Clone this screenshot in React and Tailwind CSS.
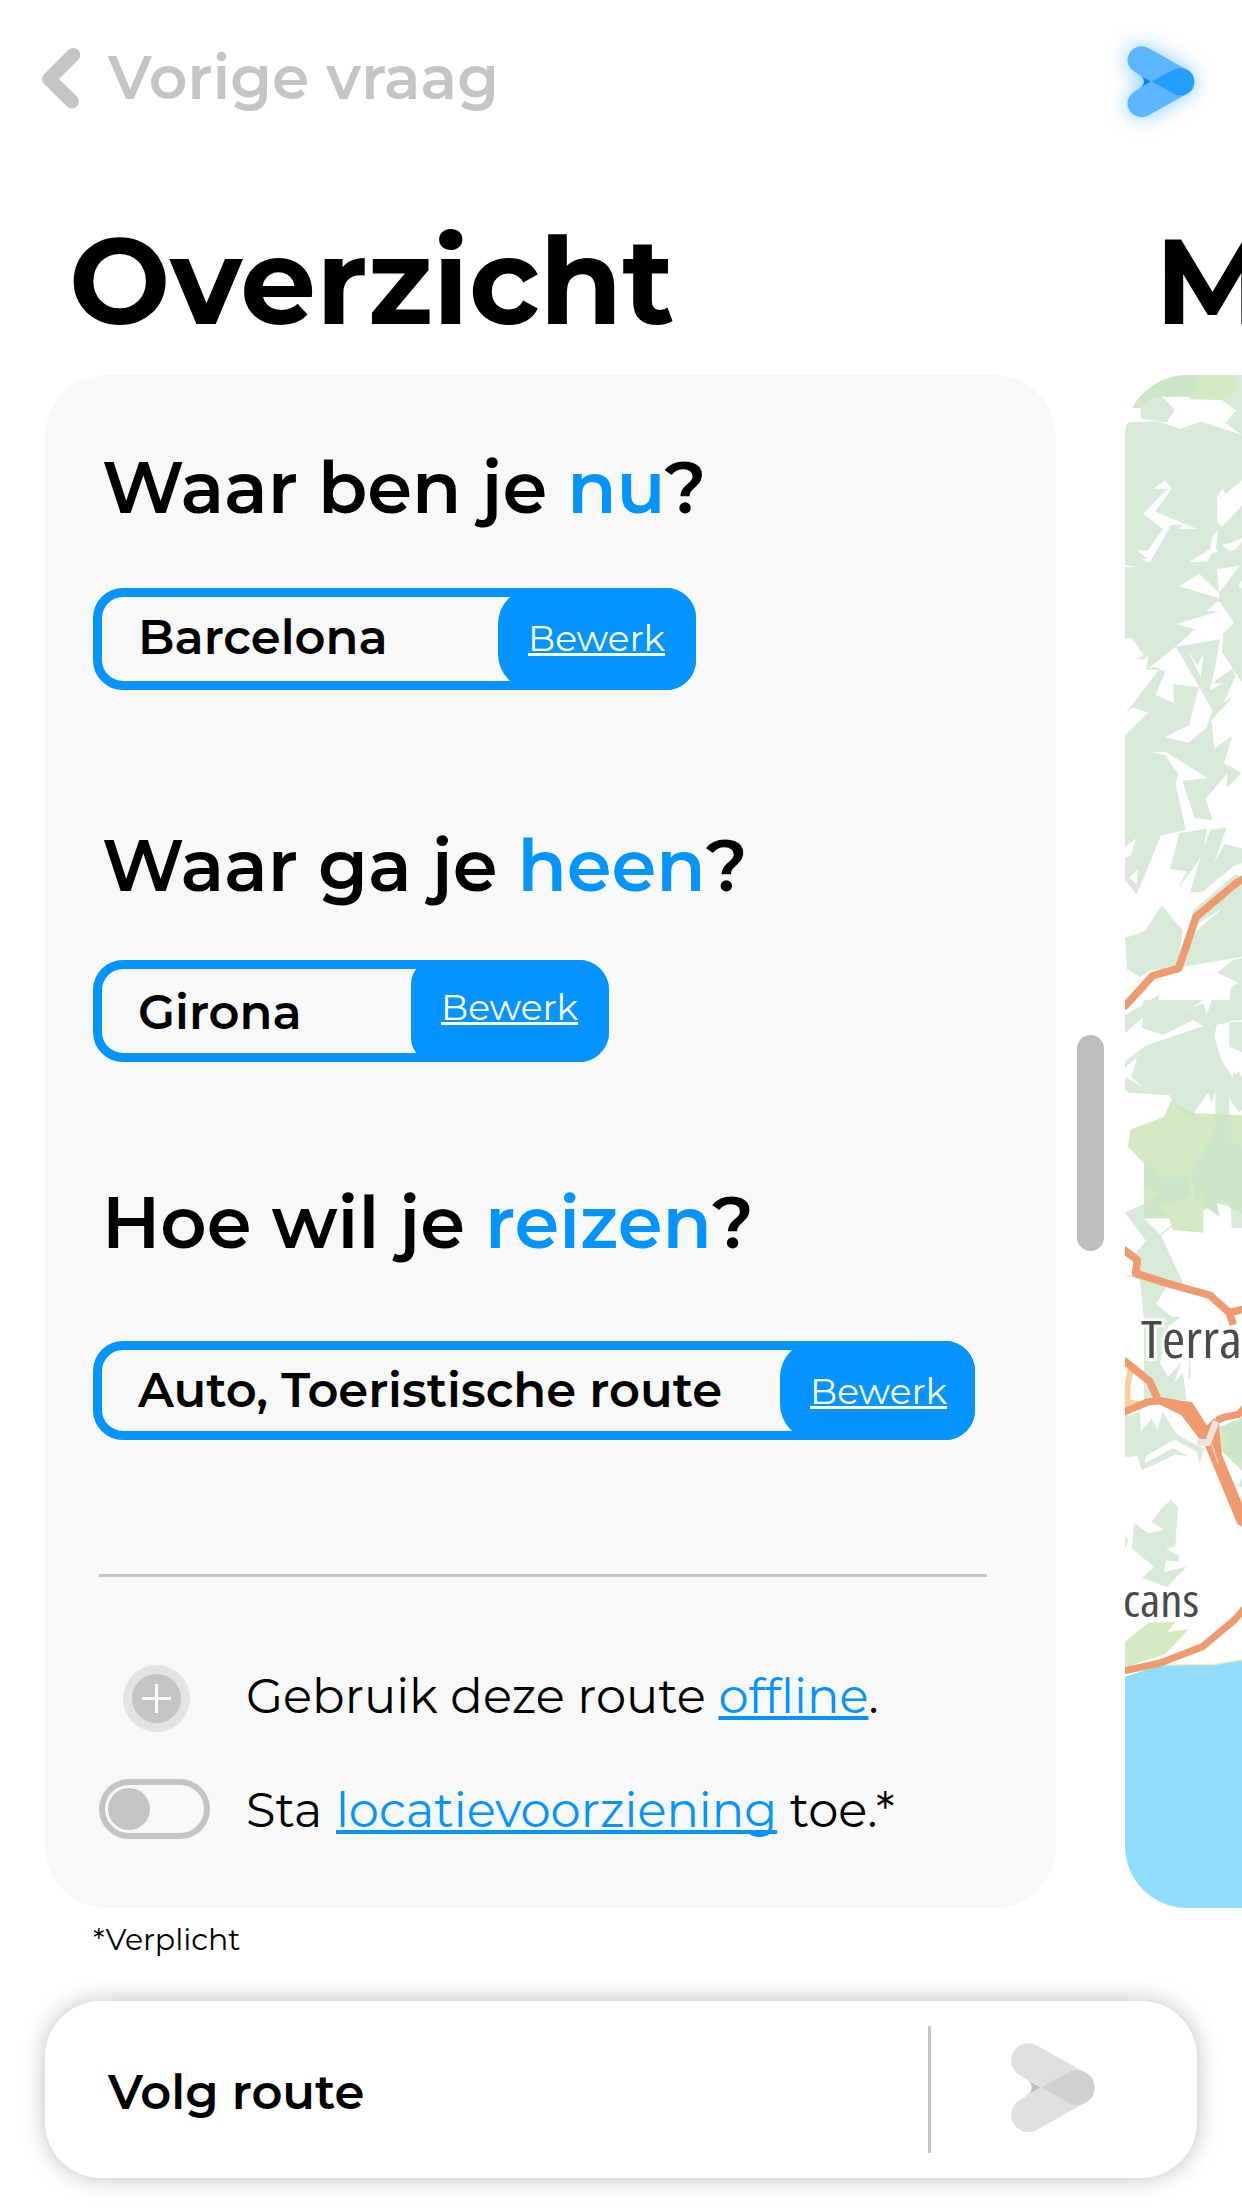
import React from "react";

function Logo({ className, arm, overlap, notch }) {
  return (
    <svg viewBox="0 0 84 90" className={`overflow-visible ${className}`}>
      <path d="M14.500 36L30 44.500L14.500 53Q20.700 49.500 20.700 44.500Q20.700 39.500 14.500 36Z" fill={notch} />
      <path d="M17.500 0.300A17.200 17.200 0 0 1 26 2.500L75 30Q66 25.500 57 30L30 44.500L9 32.500A17.200 17.200 0 0 1 17.500 0.300Z" fill={arm} />
      <path d="M17.500 89A17.200 17.200 0 0 0 26 86.800L75 59.300Q66 63.800 57 59.300L30 44.500L9 56.800A17.200 17.200 0 0 0 17.500 89Z" fill={arm} />
      <path d="M30 44.500L57 29.700Q66 25 75 29.700A17.200 17.200 0 0 1 75 59.600Q66 64.300 57 59.400Z" fill={overlap} />
    </svg>
  );
}

function Question({ className = "", markClass = "", before, word }) {
  return (
    <h2 className={`ml-[9px] text-[72px] leading-none font-semibold whitespace-nowrap ${className}`}>
      {before} <span className="text-[#0394ff]">{word}</span>
      <span className={`inline-block ${markClass}`}>?</span>
    </h2>
  );
}

function Answer({ className, valueClass, buttonClass, children }) {
  return (
    <div className={`flex justify-between rounded-[30px] border-[9px] border-[#0394ff] ${className}`}>
      <span className={`ml-9 text-5xl leading-none font-semibold whitespace-nowrap ${valueClass}`}>{children}</span>
      <button
        type="button"
        className={`-my-[9px] -mr-[9px] flex items-start rounded-r-[30px] bg-[#0394ff] pl-[30px] text-4xl leading-none font-normal text-white underline [text-decoration-skip-ink:none] ${buttonClass}`}
      >
        Bewerk
      </button>
    </div>
  );
}

const FOREST = "#d8ead8";
const PARK = "#d3eac2";
const DEEP = "#cde5c8";
const ROAD = "#ee9b70";

function RouteMap() {
  return (
    <svg viewBox="0 0 117 1533" className="h-full w-[117px] bg-white">
      <g transform="translate(-65 -175) scale(.33333)">
        <path fill={DEEP} d="M195 525H546V590L330 590Q270 600 240 625L195 625Z" />
        <path fill={PARK} d="M415 525H526L520 600H385L400 580ZM220 612L250 590L240 625Z" />
        <path fill="#fff" d="M195 625H242V655L246 662L215 666H195Z" />
        <path fill={FOREST} d="M526 525H546V705L495 668L528 632L485 600L524 580ZM242 625Q262 590 310 588L344 630L322 668L242 655Z" />
        <path fill={FOREST} d="M195 690Q195 666 215 666L290 664L362 686L422 664L546 705V1205H195Z" />
        <g fill="#fff">
          <path d="M306 588L345 597L485 600L529 632L496 668L530 697L422 664L362 686L320 668L344 630Z" />
          <path d="M280 866L316 841L335 866L286 935L412 987H355L370 975L334 974L268 1090L245 1078L262 1076L230 1050L262 1052L309 988L250 941L322 866Z" />
          <path d="M546 841L496 882L488 865L476 880L496 915L472 880L472 965L485 982L546 917Z" />
          <path d="M387 1086L450 1048L458 1010L474 990L468 1045L475 1055L458 1060L442 1085Z" />
          <path d="M546 1015L510 1030L484 1035L510 1053L524 1050L546 1025ZM540 1097L471 1108L477 1178ZM546 1140L535 1160L546 1165Z" />
          <path d="M357 1159L418 1121L477 1178V1195Z" />
          <path d="M195 1096L240 1101L195 1102Z" />
        </g>
      </g>
      <g transform="translate(-65 225) scale(.33333)">
        <path fill={FOREST} d="M195 0H546V250L486 155L490 98L523 69L475 0L440 34L480 34L351 72L405 88L348 140L262 208L318 212L287 284L342 308L350 308L396 268V316L318 328L322 312L342 308L340 253L416 262L388 374L316 411L385 428L440 383L457 330L470 318L518 291L454 360L463 446L517 408L492 490L545 519L500 565L502 520L436 597L457 660L378 690L303 706L230 884L195 840V774L214 765L228 715L195 742V406L264 338L220 322L195 342L300 205L280 200L258 210L266 165L252 178L226 178L252 164L215 114L195 116Z" />
        <g fill="#fff">
          <path d="M287 200L348 140L412 262L340 253L342 308L287 284L318 212Z" />
          <path d="M383 148L412 196L430 162L422 232Z" />
          <path d="M351 72L478 34L484 98L478 120L348 140L405 88Z" />
          <path d="M480 118L460 240L510 205L526 232L488 313L446 303L470 318L500 302L546 255V250L486 155Z" />
          <path d="M275 457L318 456L443 535L368 543L404 654L457 660L500 682L378 690L346 550L356 525L316 466Z" />
          <path d="M208 834L234 808L230 852Z" />
        </g>
        <path fill={FOREST} d="M348 140L480 118L456 250L518 205L526 232L488 313L470 330L457 330ZM340 253L412 262L396 268L350 310L342 308Z" />
        <path fill="#fff" d="M383 148L412 196L430 162L422 232ZM452 250L488 250L450 270ZM462 215L470 240L458 240Z" />
        <path fill={FOREST} d="M358 700L440 686L430 760L400 805L354 864L380 814L330 807Z" />
        <path fill={FOREST} d="M368 543L443 535L502 520L436 597L457 660L404 654Z" />
        <path fill={FOREST} d="M450 690L500 682L462 790L495 732L546 745V790L525 795L428 875L390 878L410 808Z" />
        <path fill={FOREST} d="M195 1014L256 992L305 916L369 992L352 1100L270 1112L240 1132L201 1108ZM400 930L526 822L546 830V1070L360 1102ZM520 1080L472 1118L536 1148L512 1165L508 1200H546V1075ZM270 1200L300 1183L295 1200Z" />
        <path fill="#fff" d="M412 972L488 924L440 965L402 1000Z" />
      </g>
      <g transform="translate(-65 625) scale(.33333)">
        <path fill={FOREST} d="M195 45L245 18L252 0H430L400 20L300 60L430 10L440 45L455 0H546V60L510 62L508 140L546 156V330L536 336L508 295V350H466V270L455 310L445 278L385 360L340 320L330 286L205 278L195 268V230L250 262L214 232L232 170L195 203V185L255 138L430 78L398 60L310 104L245 84L250 50L195 100Z" />
        <path fill="#fff" d="M470 75L508 66V140L546 156V232L536 215L524 225V205L518 232L484 180L463 110Z" />
        <path fill={FOREST} d="M510 66H546V156L508 140Z" />
        <path fill={PARK} d="M212 388L312 350L332 304L405 340L546 346V620H512L470 610L430 632V698L338 690L328 655H252V490L204 440Z" />
        <path fill={DEEP} d="M340 310L405 340L386 360ZM466 346H514V425L546 438V642L512 625L500 602L470 610L480 652L430 615L420 625L440 575L405 600L395 520L466 400ZM260 475L298 530H386L392 588L300 624L328 655H252V612L298 582L252 555V490Z" />
        <path fill={FOREST} d="M512 625L546 640V684H515ZM195 638L252 612V655L302 704L370 850L320 858L288 912L335 950L365 950L325 978L300 1090L325 1130L365 1085L342 1150L368 1118L380 1200H252V960L240 840L195 826L228 825L222 765L258 722Z" />
        <path fill="none" stroke={FOREST} strokeWidth="5" d="M302 704L335 678M388 1080V1135" />
        <path fill="none" stroke="#fdce9c" strokeWidth="18" d="M212 1108L202 1160V1200" />
        <g fill="none" stroke={ROAD} strokeWidth="23" strokeLinejoin="round">
          <path d="M190 748L232 780L227 820L322 850L450 886L508 938L550 928M508 938L520 974" />
          <path d="M190 1080L270 1145L298 1210" />
          <path d="M190 22L212 0L278 -73L356 -95L408 -249L530 -352L560 -368" />
        </g>
      </g>
      <g transform="translate(-65 1025) scale(.33333 .34435)">
        <path fill={FOREST} d="M195 45L240 36L242 92L275 54L292 88L308 34L350 100L420 136L434 140L418 186L410 150L345 115L258 162L254 184L340 140L386 164L345 158L246 204L232 162L195 166ZM332 290L354 312L346 424L318 434L358 452L355 470L318 466L312 500L380 484L320 544L247 516L282 484L216 432L222 356L265 388L312 376L274 354L302 318ZM195 392L206 408L195 430Z" />
        <path fill={PARK} d="M478 80L546 50V205L486 150ZM546 225L535 250L546 255ZM195 702L266 646L346 645L322 674L386 666L315 738L195 776Z" />
        <path fill={DEEP} d="M478 78L546 55V182L492 150L512 122Z" />
        <path fill="#8fdcfb" d="M195 804L300 771L460 768L546 756V1580H195Z" />
        <path fill="none" stroke="#faeebb" strokeWidth="4" d="M255 783L300 768L460 768L546 754" />
        <path fill="none" stroke="#fdce9c" strokeWidth="26" d="M190 8L242 18" />
        <path fill="none" stroke={ROAD} strokeWidth="21" d="M190 787L300 764L428 716L522 640L555 604" />
        <path fill="none" stroke={ROAD} strokeWidth="21" d="M190 36L262 6L300 2L385 16M470 60L492 50L535 42L555 22M440 88L470 60" />
        <path fill={ROAD} d="M300 -2L396 6L445 80L476 62L486 160L546 300V368L532 360L436 136L364 44L300 14Z" />
        <path fill="none" stroke="#fbe3d6" strokeWidth="3" d="M456 130L474 184" />
        <path fill="none" stroke="#efe3dc" strokeWidth="20" strokeLinejoin="round" d="M412 122L444 124L468 62" />
      </g>
      <g className="font-['Open_Sans',sans-serif] [font-stretch:75%]" fill="#4a4a4a" stroke="#fff" strokeOpacity=".75" strokeWidth="6" paintOrder="stroke" fontWeight="500">
        <text x="16" y="983" fontSize="51" textLength="101" lengthAdjust="spacingAndGlyphs">Terra</text>
        <text x="-2" y="1242" fontSize="45" textLength="76" lengthAdjust="spacingAndGlyphs">cans</text>
      </g>
    </svg>
  );
}

export default function App() {
  return (
    <div className="flex h-[2208px] w-[1242px] flex-col overflow-hidden bg-white font-['Montserrat',Inter,sans-serif] text-black">
      <header className="flex h-[221px] shrink-0 items-start justify-between pr-[47px] pl-[42px]">
        <a className="flex pt-12 text-[60px] leading-none font-semibold tracking-[0.2px] text-[#c4c4c4]">
          <svg viewBox="0 0 38 62" className="-mt-px mr-7 h-[62px] w-[38px]" fill="none" stroke="currentColor" strokeWidth="14" strokeLinecap="round" strokeLinejoin="round">
            <path d="M31.200 8L7 32L30 54.500" />
          </svg>
          Vorige vraag
        </a>
        <Logo
          className="mt-[46px] h-[72px] w-[68px] drop-shadow-[0_0_10px_rgba(3,148,255,0.5)]"
          arm="#5bb6ff"
          overlap="#229fff"
          notch="#0b83e6"
        />
      </header>

      <div className="flex h-[154px] shrink-0 text-[120px] leading-none font-bold">
        <h1 className="ml-[69px] w-[1086px] shrink-0">Overzicht</h1>
        <h1 className="shrink-0">M</h1>
      </div>

      <main className="flex h-[1533px] shrink-0">
        <section className="ml-[45px] w-[1011px] shrink-0 rounded-[62px] bg-[#f8f8f8] pt-[76px] pl-12">
          <Question before="Waar ben je" word="nu" markClass="-ml-px" />
          <Answer className="mt-[65px] h-[102px] w-[603px]" valueClass="mt-4" buttonClass="w-[198px] rounded-l-[36px] pt-8">
            Barcelona
          </Answer>
          <Question className="mt-[139px]" before="Waar ga je" word="heen" />
          <Answer className="mt-[59px] h-[102px] w-[516px]" valueClass="mt-[19px]" buttonClass="w-[198px] rounded-l-[24px] pt-[29px]">
            Girona
          </Answer>
          <Question className="mt-[124px]" before="Hoe wil je" word="reizen" />
          <Answer className="mt-[83px] h-[99px] w-[882px]" valueClass="mt-4" buttonClass="w-[195px] rounded-l-[36px] pt-8">
            Auto, Toeristische route
          </Answer>

          <div className="mt-[134px] ml-1.5 h-[3px] w-[888px] bg-[#c4c4c4]" />

          <div className="mt-[88px] flex h-[67px]">
            <div className="ml-[30px] flex size-[67px] items-center justify-center rounded-full bg-[#e3e3e3]">
              <div className="flex size-[49px] items-center justify-center rounded-full bg-[#c4c4c4]">
                <svg viewBox="0 0 29 29" className="size-[29px]" stroke="#fff" strokeWidth="3">
                  <path d="M14.500 0V29M0 14.500H29" />
                </svg>
              </div>
            </div>
            <p className="mt-[7px] ml-14 text-5xl leading-none whitespace-nowrap">
              Gebruik deze route{" "}
              <a className="text-[#0394ff] underline [text-decoration-skip-ink:none]">offline</a>.
            </p>
          </div>
          <div className="mt-[47px] flex h-[60px]">
            <div className="ml-1.5 flex w-[111px] items-center rounded-full border-[6px] border-[#c4c4c4] pl-[3px]">
              <div className="size-[42px] rounded-full bg-[#c4c4c4]" />
            </div>
            <p className="mt-[7px] ml-9 text-5xl leading-none whitespace-nowrap">
              Sta <a className="ml-px text-[#0394ff] underline [text-decoration-skip-ink:none]">locatievoorziening</a> toe.*
            </p>
          </div>
        </section>

        <div className="mt-[660px] ml-[21px] h-[216px] w-[27px] shrink-0 rounded-full bg-[#bdbdbd]" />

        <section className="ml-[21px] w-[117px] shrink-0 overflow-hidden rounded-l-[62px]">
          <RouteMap />
        </section>
      </main>

      <p className="mt-[17px] ml-[93px] text-3xl leading-none">*Verplicht</p>

      <footer className="mt-[46px] ml-[45px] flex h-[177px] w-[1152px] shrink-0 items-start rounded-[56px] bg-white shadow-[0_0_24px_rgba(0,0,0,0.25)]">
        <span className="mt-[67px] ml-[63px] w-[820px] text-5xl leading-none font-semibold">Volg route</span>
        <div className="mt-[25px] h-[127px] w-[3px] bg-[#c4c4c4]" />
        <Logo className="mt-[42px] ml-[80px] h-[90px] w-[84px]" arm="#e0e0e0" overlap="#d0d0d0" notch="#c0c0c0" />
      </footer>
    </div>
  );
}
